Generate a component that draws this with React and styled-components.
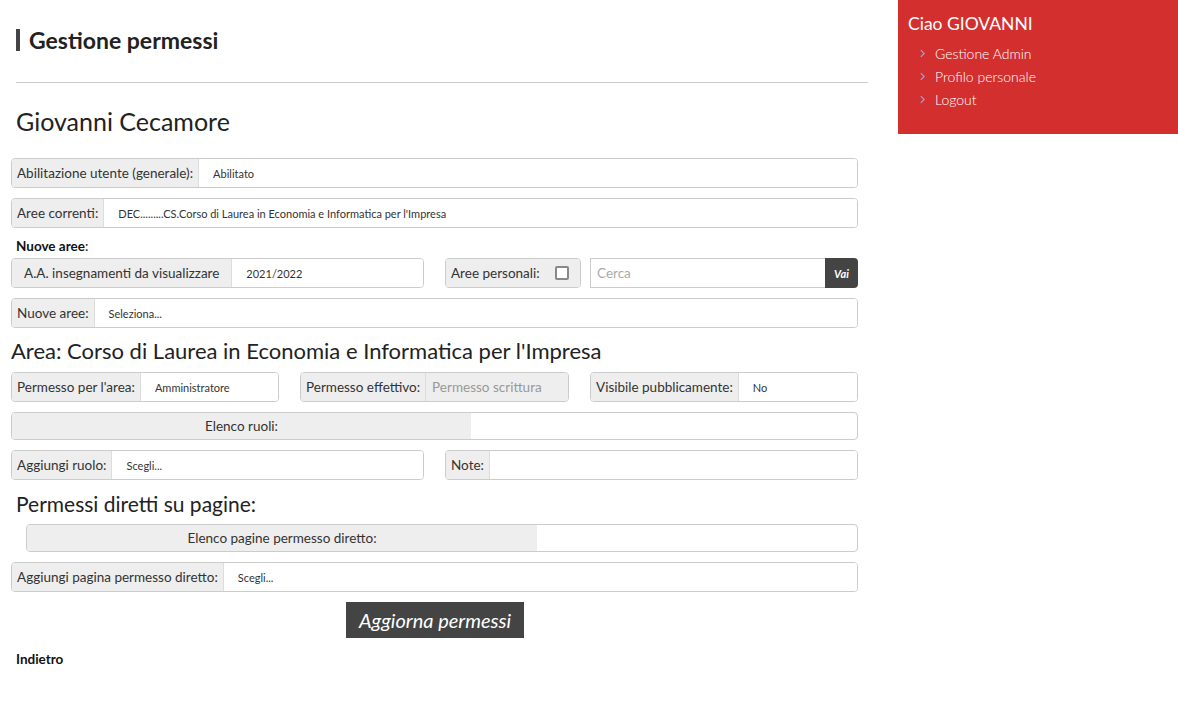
import React from 'react';
import styled, { createGlobalStyle } from 'styled-components';

const GlobalStyle = createGlobalStyle`
  body {
    margin: 0;
    background: #fff;
    font-family: Lato, "Liberation Sans", sans-serif;
    color: #333;
  }
`;

const menu = ['Gestione Admin', 'Profilo personale', 'Logout'];

const App = () => {
  return (
    <Page>
      <GlobalStyle />
      <Main>
        <TitleBar>
          <TitleMark />
          <Title>Gestione permessi</Title>
        </TitleBar>
        <Divider />
        <UserName>Giovanni Cecamore</UserName>

        <Group>
          <Label>Abilitazione utente (generale):</Label>
          <Value>Abilitato</Value>
        </Group>
        <Group>
          <Label>Aree correnti:</Label>
          <Value>DEC.........CS.Corso di Laurea in Economia e Informatica per l'Impresa</Value>
        </Group>

        <SubLabel><strong>Nuove aree</strong>:</SubLabel>
        <Row $top="4px">
          <Group $w="413px" $gapAfter="21px">
            <Label $pad="12px">A.A. insegnamenti da visualizzare</Label>
            <Value>2021/2022</Value>
          </Group>
          <Group $w="136px" $gapAfter="9px">
            <Label $grow>
              Aree personali:
              <Check />
            </Label>
          </Group>
          <SearchGroup>
            <SearchInput>Cerca</SearchInput>
            <GoButton>Vai</GoButton>
          </SearchGroup>
        </Row>
        <Group>
          <Label>Nuove aree:</Label>
          <Value>Seleziona...</Value>
        </Group>

        <AreaTitle>Area: Corso di Laurea in Economia e Informatica per l'Impresa</AreaTitle>
        <Row $top="8px">
          <Group $w="268px" $gapAfter="21px">
            <Label>Permesso per l'area:</Label>
            <Value>Amministratore</Value>
          </Group>
          <Group $w="269px" $gapAfter="21px">
            <Label>Permesso effettivo:</Label>
            <Disabled>Permesso scrittura</Disabled>
          </Group>
          <Group $w="268px">
            <Label>Visibile pubblicamente:</Label>
            <Value>No</Value>
          </Group>
        </Row>
        <ListBox>
          <ListHead $w="459px">Elenco ruoli:</ListHead>
        </ListBox>
        <Row>
          <Group $w="413px" $gapAfter="21px">
            <Label>Aggiungi ruolo:</Label>
            <Value>Scegli...</Value>
          </Group>
          <Group $w="413px">
            <Label>Note:</Label>
            <Value />
          </Group>
        </Row>

        <SectionTitle>Permessi diretti su pagine:</SectionTitle>
        <ListBox $indent="15px" $top="7px">
          <ListHead $w="510px">Elenco pagine permesso diretto:</ListHead>
        </ListBox>
        <Group>
          <Label>Aggiungi pagina permesso diretto:</Label>
          <Value>Scegli...</Value>
        </Group>

        <Submit>Aggiorna permessi</Submit>
        <Back>Indietro</Back>
      </Main>

      <Sidebar>
        <Hello>Ciao GIOVANNI</Hello>
        <Menu>
          {menu.map((m) => (
            <MenuItem key={m}>
              <Chevron viewBox="0 0 6 10">
                <path d="M1 1 L5 5 L1 9" fill="none" stroke="#9aa6e6" strokeWidth="1.3" />
              </Chevron>
              {m}
            </MenuItem>
          ))}
        </Menu>
      </Sidebar>
    </Page>
  );
};

const Page = styled.div`
  display: flex;
  justify-content: space-between;
  align-items: flex-start;
  width: 1178px;
`;

const Main = styled.div`
  width: 847px;
  margin-left: 11px;
  display: flex;
  flex-direction: column;
`;

const TitleBar = styled.div`
  display: flex;
  align-items: center;
  gap: 9px;
  margin-top: 29px;
  padding-left: 5px;
  height: 22px;
`;

const TitleMark = styled.span`
  width: 4px;
  height: 22px;
  background: #444;
`;

const Title = styled.h1`
  margin: 0;
  font-size: 23px;
  font-weight: 700;
  color: #222;
  line-height: 22px;
`;

const Divider = styled.hr`
  margin: 31px 0 0 5px;
  width: 852px;
  border: 0;
  border-top: 1px solid #ccc;
`;

const UserName = styled.h2`
  margin: 22px 0 11px 5px;
  font-size: 25px;
  font-weight: 400;
  color: #222;
  line-height: 32px;
`;

const Row = styled.div`
  display: flex;
  margin-top: ${(p) => p.$top || '10px'};
`;

const Group = styled.div`
  display: flex;
  flex: 0 0 auto;
  width: ${(p) => p.$w || '100%'};
  height: 30px;
  box-sizing: border-box;
  border: 1px solid #ccc;
  border-radius: 4px;
  overflow: hidden;
  margin-top: 10px;
  margin-right: ${(p) => p.$gapAfter || '0'};
  ${Row} > & {
    margin-top: 0;
  }
`;

const Label = styled.div`
  display: flex;
  align-items: center;
  justify-content: ${(p) => (p.$grow ? 'space-between' : 'flex-start')};
  flex: ${(p) => (p.$grow ? '1' : '0 0 auto')};
  padding: 0 ${(p) => p.$pad || '5px'};
  background: #eee;
  border-right: ${(p) => (p.$grow ? '0' : '1px solid #ddd')};
  font-size: 13.5px;
  color: #333;
  white-space: nowrap;
`;

const Value = styled.div`
  flex: 1;
  display: flex;
  align-items: center;
  padding-left: 14px;
  font-size: 11px;
  color: #333;
  white-space: nowrap;
  background: #fff;
`;

const Disabled = styled.div`
  flex: 1;
  display: flex;
  align-items: center;
  padding-left: 6px;
  background: #eee;
  font-size: 13.5px;
  color: #999;
  white-space: nowrap;
`;

const Check = styled.span`
  flex-shrink: 0;
  width: 10px;
  height: 10px;
  border: 2px solid #888;
  border-radius: 2px;
  margin-right: 6px;
  background: #fff;
`;

const SearchGroup = styled.div`
  display: flex;
  flex: 0 0 auto;
  width: 268px;
  height: 30px;
  box-sizing: border-box;
`;

const SearchInput = styled.div`
  flex: 1;
  display: flex;
  align-items: center;
  padding-left: 6px;
  border: 1px solid #ccc;
  border-right: 0;
  font-size: 13.5px;
  color: #aaa;
`;

const GoButton = styled.div`
  width: 33px;
  display: flex;
  align-items: center;
  justify-content: center;
  background: #444;
  border-radius: 0 4px 4px 0;
  color: #fff;
  font-size: 11px;
  font-style: italic;
  font-weight: 700;
`;

const SubLabel = styled.div`
  margin: 10px 0 0 5px;
  font-size: 13.5px;
  color: #111;
  line-height: 16px;
  strong {
    font-weight: 700;
  }
`;

const AreaTitle = styled.h3`
  margin: 10px 0 0 0;
  font-size: 22px;
  font-weight: 400;
  color: #222;
  line-height: 26px;
`;

const SectionTitle = styled.h3`
  margin: 11px 0 0 5px;
  font-size: 21px;
  font-weight: 400;
  color: #222;
  line-height: 26px;
`;

const ListBox = styled.div`
  display: flex;
  height: 28px;
  box-sizing: border-box;
  margin: ${(p) => p.$top || '10px'} 0 0 ${(p) => p.$indent || '0'};
  border: 1px solid #ccc;
  border-radius: 4px;
  overflow: hidden;
`;

const ListHead = styled.div`
  width: ${(p) => p.$w};
  background: #eee;
  display: flex;
  align-items: center;
  justify-content: center;
  font-size: 13.5px;
  color: #333;
`;

const Submit = styled.button`
  align-self: flex-start;
  margin: 10px 0 0 335px;
  height: 36px;
  width: 178px;
  border: 0;
  background: #444;
  color: #fff;
  font-family: inherit;
  font-size: 20px;
  font-style: italic;
  padding: 0;
`;

const Back = styled.div`
  margin: 13px 0 0 5px;
  font-size: 13.5px;
  font-weight: 700;
  color: #111;
`;

const Sidebar = styled.div`
  width: 280px;
  height: 134px;
  box-sizing: border-box;
  background: #d32f2f;
  padding: 12px 10px 0;
  color: #fff;
`;

const Hello = styled.div`
  font-size: 17.5px;
  line-height: 24px;
`;

const Menu = styled.ul`
  list-style: none;
  margin: 6px 0 0;
  padding: 0 0 0 12px;
`;

const MenuItem = styled.li`
  display: flex;
  align-items: center;
  gap: 10px;
  height: 23px;
  font-size: 14px;
  font-weight: 300;
`;

const Chevron = styled.svg`
  width: 5px;
  height: 9px;
`;

export default App;
